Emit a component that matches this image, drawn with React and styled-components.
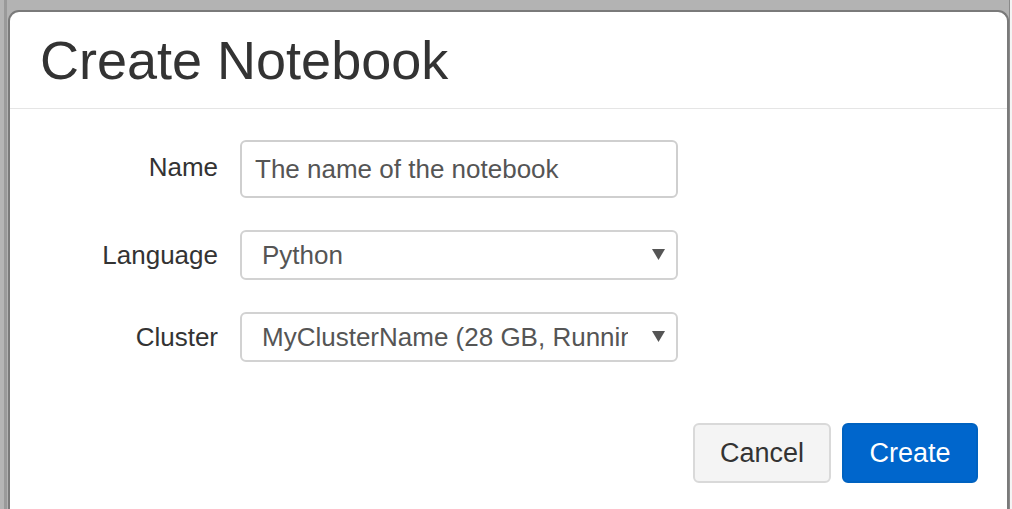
import React from "react";
import styled, { createGlobalStyle } from "styled-components";

const GlobalStyle = createGlobalStyle`
  html, body {
    margin: 0;
    padding: 0;
    background: #b3b3b3;
    overflow: hidden;
  }
  body {
    font-family: "Liberation Sans", Arial, sans-serif;
  }
`;

const Page = styled.div`
  width: 1012px;
  height: 509px;
  display: flex;
  padding-top: 10px;
  box-sizing: border-box;
  overflow: hidden;
  background: linear-gradient(
    to right,
    #b5b5b5 0,
    #b5b5b5 4px,
    #9a9a9a 4px,
    #9a9a9a 7px,
    #b3b3b3 7px,
    #b3b3b3 1009px,
    #8a8a8a 1009px,
    #8a8a8a 1010px,
    #f4f4f4 1010px
  );
`;

const Dialog = styled.div`
  margin-left: 8px;
  width: 1001px;
  height: 499px;
  flex-shrink: 0;
  background: #fff;
  border: 2px solid #7a7a7a;
  border-bottom: none;
  border-radius: 11px 11px 0 0;
  box-sizing: border-box;
  display: flex;
  flex-direction: column;
`;

const Header = styled.div`
  height: 96px;
  border-bottom: 1px solid #e5e5e5;
  padding-left: 30px;
  display: flex;
  align-items: center;
`;

const Title = styled.h1`
  margin: 0;
  font-size: 54px;
  font-weight: 400;
  color: #333;
`;

const Body = styled.div`
  padding-top: 31px;
  display: flex;
  flex-direction: column;
  gap: 32px;
`;

const Row = styled.div`
  display: grid;
  grid-template-columns: 208px 438px;
  column-gap: 22px;
  align-items: center;
  height: ${(p) => p.$height}px;
`;

const Label = styled.label`
  text-align: right;
  font-size: 26px;
  color: #333;
  padding-bottom: ${(p) => (p.$lift ? 4 : 0)}px;
`;

const TextInput = styled.input`
  box-sizing: border-box;
  width: 438px;
  height: 58px;
  border: 2px solid #cfcfcf;
  border-radius: 6px;
  padding: 0 13px;
  font-family: "Liberation Sans", Arial, sans-serif;
  font-size: 26px;
  color: #555;
  outline: none;
  &::placeholder {
    color: #555;
  }
`;

const Select = styled.div`
  box-sizing: border-box;
  width: 438px;
  height: 50px;
  border: 2px solid #d2d2d2;
  border-radius: 6px;
  padding: 0 0 0 20px;
  display: flex;
  align-items: center;
  justify-content: space-between;
  font-size: 26px;
  color: #555;
`;

const SelectValue = styled.span`
  width: 366px;
  overflow: hidden;
  white-space: nowrap;
`;

const Arrow = styled.svg`
  width: 13px;
  height: 11px;
  margin-right: 11px;
  margin-top: -2px;
  flex-shrink: 0;
`;

const Footer = styled.div`
  display: flex;
  justify-content: flex-end;
  gap: 11px;
  padding: 61px 29px 0 0;
`;

const Button = styled.button`
  box-sizing: border-box;
  height: 60px;
  width: ${(p) => p.$width}px;
  border-radius: 6px;
  font-family: "Liberation Sans", Arial, sans-serif;
  font-size: 27px;
  border: 2px solid ${(p) => (p.$primary ? "#0062c0" : "#d9d9d9")};
  background: ${(p) => (p.$primary ? "#0066cc" : "#f4f4f4")};
  color: ${(p) => (p.$primary ? "#fff" : "#333")};
  padding: 0;
`;

const Caret = () => (
  <Arrow viewBox="0 0 13 11">
    <path d="M0 0 H13 L6.5 11 Z" fill="#555" />
  </Arrow>
);

export default function App() {
  return (
    <>
      <GlobalStyle />
      <Page>
        <Dialog>
          <Header>
            <Title>Create Notebook</Title>
          </Header>
          <Body>
            <Row $height={58}>
              <Label $lift>Name</Label>
              <TextInput placeholder="The name of the notebook" />
            </Row>
            <Row $height={50}>
              <Label>Language</Label>
              <Select>
                <SelectValue>Python</SelectValue>
                <Caret />
              </Select>
            </Row>
            <Row $height={50}>
              <Label>Cluster</Label>
              <Select>
                <SelectValue>MyClusterName (28 GB, Running)</SelectValue>
                <Caret />
              </Select>
            </Row>
          </Body>
          <Footer>
            <Button $width={138}>Cancel</Button>
            <Button $primary $width={136}>
              Create
            </Button>
          </Footer>
        </Dialog>
      </Page>
    </>
  );
}
